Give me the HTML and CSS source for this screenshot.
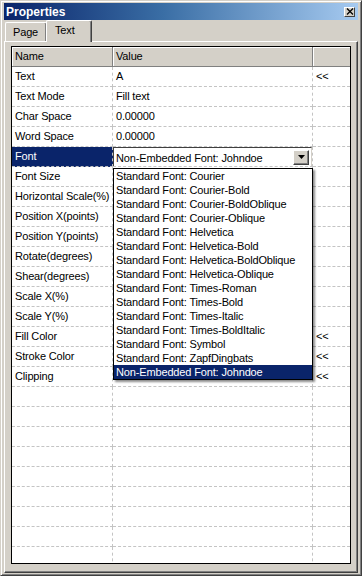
FILE: index.html
```html
<!DOCTYPE html>
<html>
<head>
<meta charset="utf-8">
<link rel="stylesheet" href="styles.css">
</head>
<body>
<div class="window">
  <div class="titlebar">
    <span class="title">Properties</span>
    <div class="close"><svg width="8" height="7" viewBox="0 0 8 7"><path d="M1 0.5 L7 6.5 M7 0.5 L1 6.5" stroke="#000" stroke-width="1.3" fill="none"/></svg></div>
  </div>
  <div class="tabs">
    <div class="tab">Page</div>
    <div class="tab active">Text</div>
  </div>
  <div class="panel">
    <div class="table">
      <div class="row head"><div class="c c1">Name</div><div class="c c2">Value</div><div class="c c3"></div></div>
      <div class="row"><div class="c c1">Text</div><div class="c c2">A</div><div class="c c3">&lt;&lt;</div></div>
      <div class="row"><div class="c c1">Text Mode</div><div class="c c2">Fill text</div><div class="c c3"></div></div>
      <div class="row"><div class="c c1">Char Space</div><div class="c c2">0.00000</div><div class="c c3"></div></div>
      <div class="row"><div class="c c1">Word Space</div><div class="c c2">0.00000</div><div class="c c3"></div></div>
      <div class="row"><div class="c c1 sel">Font</div><div class="c c2 combo-cell"><div class="combo"><span class="combo-text">Non-Embedded Font: Johndoe</span><span class="arrow"><svg width="7" height="4" viewBox="0 0 7 4"><path d="M0 0 H7 L3.5 4 Z" fill="#000"/></svg></span></div></div><div class="c c3"></div></div>
      <div class="row"><div class="c c1">Font Size</div><div class="c c2"></div><div class="c c3"></div></div>
      <div class="row"><div class="c c1">Horizontal Scale(%)</div><div class="c c2"></div><div class="c c3"></div></div>
      <div class="row"><div class="c c1">Position X(points)</div><div class="c c2"></div><div class="c c3"></div></div>
      <div class="row"><div class="c c1">Position Y(points)</div><div class="c c2"></div><div class="c c3"></div></div>
      <div class="row"><div class="c c1">Rotate(degrees)</div><div class="c c2"></div><div class="c c3"></div></div>
      <div class="row"><div class="c c1">Shear(degrees)</div><div class="c c2"></div><div class="c c3"></div></div>
      <div class="row"><div class="c c1">Scale X(%)</div><div class="c c2"></div><div class="c c3"></div></div>
      <div class="row"><div class="c c1">Scale Y(%)</div><div class="c c2"></div><div class="c c3"></div></div>
      <div class="row"><div class="c c1">Fill Color</div><div class="c c2"></div><div class="c c3">&lt;&lt;</div></div>
      <div class="row"><div class="c c1">Stroke Color</div><div class="c c2"></div><div class="c c3">&lt;&lt;</div></div>
      <div class="row"><div class="c c1">Clipping</div><div class="c c2"></div><div class="c c3">&lt;&lt;</div></div>
      <div class="row"><div class="c c1"></div><div class="c c2"></div><div class="c c3"></div></div>
      <div class="row"><div class="c c1"></div><div class="c c2"></div><div class="c c3"></div></div>
      <div class="row"><div class="c c1"></div><div class="c c2"></div><div class="c c3"></div></div>
      <div class="row"><div class="c c1"></div><div class="c c2"></div><div class="c c3"></div></div>
      <div class="row"><div class="c c1"></div><div class="c c2"></div><div class="c c3"></div></div>
      <div class="row"><div class="c c1"></div><div class="c c2"></div><div class="c c3"></div></div>
      <div class="row"><div class="c c1"></div><div class="c c2"></div><div class="c c3"></div></div>
      <div class="row"><div class="c c1"></div><div class="c c2"></div><div class="c c3"></div></div>
      <div class="row"><div class="c c1"></div><div class="c c2"></div><div class="c c3"></div></div>

      <ul class="dropdown">
        <li>Standard Font: Courier</li>
        <li>Standard Font: Courier-Bold</li>
        <li>Standard Font: Courier-BoldOblique</li>
        <li>Standard Font: Courier-Oblique</li>
        <li>Standard Font: Helvetica</li>
        <li>Standard Font: Helvetica-Bold</li>
        <li>Standard Font: Helvetica-BoldOblique</li>
        <li>Standard Font: Helvetica-Oblique</li>
        <li>Standard Font: Times-Roman</li>
        <li>Standard Font: Times-Bold</li>
        <li>Standard Font: Times-Italic</li>
        <li>Standard Font: Times-BoldItalic</li>
        <li>Standard Font: Symbol</li>
        <li>Standard Font: ZapfDingbats</li>
        <li class="picked">Non-Embedded Font: Johndoe</li>
      </ul>
    </div>
  </div>
</div>
</body>
</html>
```
FILE: styles.css
```css
* { box-sizing: border-box; }
html, body { margin: 0; padding: 0; background: #d4d0c8; }
body {
  font-family: "Liberation Sans", Arial, sans-serif;
  font-size: 11px;
  letter-spacing: -0.15px;
  color: #000;
}
.window {
  width: 362px;
  height: 576px;
  background: #d4d0c8;
  border: 1px solid;
  border-color: #d4d0c8 #404040 #404040 #d4d0c8;
  box-shadow: inset 1px 1px 0 #fff, inset -1px -1px 0 #808080;
  padding: 2px 3px 2px 3px;
  display: flex;
  flex-direction: column;
}
.titlebar {
  height: 17px;
  background: linear-gradient(to right, #0a246a 0%, #3a6ea5 45%, #a6caf0 100%);
  display: flex;
  align-items: center;
  justify-content: space-between;
  padding: 0 3px 0 2px;
}
.title {
  color: #fff;
  font-weight: bold;
  font-size: 12px;
  letter-spacing: 0;
}
.close {
  width: 11px;
  height: 10px;
  background: #d4d0c8;
  border: 1px solid;
  border-color: #fff #404040 #404040 #fff;
  display: flex;
  align-items: center;
  justify-content: center;
}
.close svg { display: block; }
.tabs {
  height: 21px;
  display: flex;
  align-items: flex-end;
  padding-left: 1px;
  position: relative;
  z-index: 2;
}
.tab {
  height: 19px;
  padding: 3px 7px 0 7px;
  border-top: 1px solid #fff;
  border-left: 1px solid #fff;
  border-right: 1px solid #404040;
  box-shadow: inset -1px 0 0 #808080;
  border-radius: 2px 2px 0 0;
  width: 42px;
}
.tab.active {
  height: 22px;
  margin-bottom: -1px;
  margin-left: -1px;
  width: 46px;
  padding: 3px 0 0 8px;
  background: #d4d0c8;
}
.panel {
  flex: 1;
  border-top: 1px solid #fff;
  border-left: 1px solid #fff;
  border-right: 1px solid #404040;
  border-bottom: 1px solid #404040;
  box-shadow: inset -1px -1px 0 #808080;
  padding: 4px 0 0 6px;
}
.table {
  position: relative;
  width: 340px;
  height: 518px;
  border: 1px solid #000;
  background: #fff;
  overflow: hidden;
}
.row {
  display: grid;
  grid-template-columns: 101px 200px 37px;
  height: 20px;
}
.c {
  height: 20px;
  border-bottom: 1px dashed #c4c4c4;
  padding: 3px 0 0 3px;
  white-space: nowrap;
  overflow: hidden;
}
.c1, .c2 { border-right: 1px dashed #c4c4c4; }
.head .c {
  background: #d4d0c8;
  border-bottom: 1px solid #808080;
  border-right: 1px solid #808080;
  box-shadow: inset 1px 1px 0 #fff;
}
.head .c3 { border-right: none; }
.c1.sel {
  background: #0a246a;
  color: #fff;
}
.combo-cell { padding: 0; }
.combo {
  height: 20px;
  border: 1px solid;
  border-color: #404040 #d4d0c8 #fff #404040;
  display: flex;
  align-items: center;
  justify-content: space-between;
  padding-left: 2px;
  padding-right: 2px;
  background: #fff;
}
.combo-text { padding-top: 1px; }
.arrow {
  width: 16px;
  height: 15px;
  background: #d4d0c8;
  border: 1px solid;
  border-color: #fff #404040 #404040 #fff;
  box-shadow: inset -1px -1px 0 #808080;
  display: flex;
  align-items: center;
  justify-content: center;
}
.arrow svg { display: block; }
.dropdown {
  position: absolute;
  left: 101px;
  top: 121px;
  width: 200px;
  margin: 0;
  padding: 0;
  list-style: none;
  background: #fff;
  border: 1px solid #000;
  box-shadow: 2px 2px 2px rgba(0,0,0,0.45);
  z-index: 3;
}
.dropdown li {
  height: 14px;
  line-height: 14px;
  padding-left: 2px;
  white-space: nowrap;
}
.dropdown li.picked {
  background: #0a246a;
  color: #fff;
}
```
